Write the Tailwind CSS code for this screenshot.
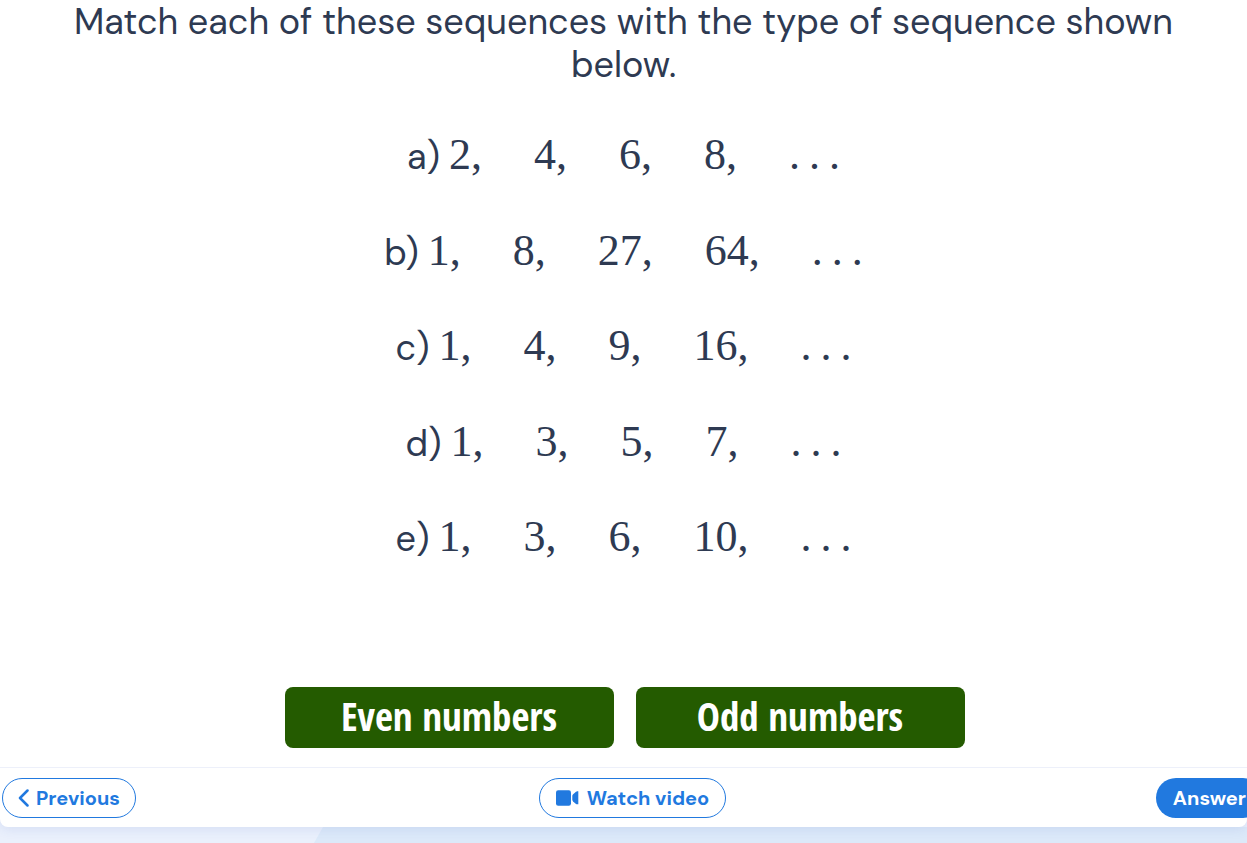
<!DOCTYPE html>
<html lang="en">
<head>
<meta charset="utf-8">
<meta name="viewport" content="width=device-width, initial-scale=1">
<title>Sequences</title>
<script src="https://cdn.jsdelivr.net/npm/@tailwindcss/browser@4"></script>
</head>
<body class="min-h-screen overflow-x-hidden bg-[#eaf0fc] font-['DM_Sans','Inter',sans-serif] text-[#2e3a52]">
<main class="relative z-10 flex flex-col rounded-b-lg bg-white shadow-[0_2px_12px_rgba(60,90,190,0.12)]">
  <section class="flex flex-col items-center">
    <h1 class="max-w-[1180px] text-center text-[36px] leading-[43px]">Match each of these sequences with the type of sequence shown below.</h1>
    <ul class="flex flex-col items-center pt-5 text-[36px]">
      <li class="flex h-24 items-baseline gap-[9px] pt-4"><span>a)</span><span class="flex gap-[52px] font-['Liberation_Serif',serif] text-[44px]"><span>2,</span><span>4,</span><span>6,</span><span>8,</span><span class="flex gap-[9px]"><span>.</span><span>.</span><span>.</span></span></span></li>
      <li class="flex h-[95px] items-baseline gap-[9px] pt-4"><span>b)</span><span class="flex gap-[52px] font-['Liberation_Serif',serif] text-[44px]"><span>1,</span><span>8,</span><span>27,</span><span>64,</span><span class="flex gap-[9px]"><span>.</span><span>.</span><span>.</span></span></span></li>
      <li class="flex h-24 items-baseline gap-[9px] pt-4"><span>c)</span><span class="flex gap-[52px] font-['Liberation_Serif',serif] text-[44px]"><span>1,</span><span>4,</span><span>9,</span><span>16,</span><span class="flex gap-[9px]"><span>.</span><span>.</span><span>.</span></span></span></li>
      <li class="flex h-[95px] items-baseline gap-[9px] pt-4"><span>d)</span><span class="flex gap-[52px] font-['Liberation_Serif',serif] text-[44px]"><span>1,</span><span>3,</span><span>5,</span><span>7,</span><span class="flex gap-[9px]"><span>.</span><span>.</span><span>.</span></span></span></li>
      <li class="flex h-[95px] items-baseline gap-[9px] pt-4"><span>e)</span><span class="flex gap-[52px] font-['Liberation_Serif',serif] text-[44px]"><span>1,</span><span>3,</span><span>6,</span><span>10,</span><span class="flex gap-[9px]"><span>.</span><span>.</span><span>.</span></span></span></li>
    </ul>
    <div class="flex gap-[22px] pt-[104px] pb-[19px] pl-0.5 font-['Liberation_Sans_Narrow','Open_Sans_Condensed',sans-serif] text-[39px] leading-none font-bold text-white">
      <button type="button" class="h-[61px] w-[329px] rounded-lg bg-[#245b00] pb-1">Even numbers</button>
      <button type="button" class="h-[61px] w-[329px] rounded-lg bg-[#245b00] pb-1">Odd numbers</button>
    </div>
  </section>
  <nav aria-label="Question controls" class="-mr-4 grid grid-cols-[1fr_auto_1fr] items-center border-t border-[#edf0fa] pt-2.5 pb-[9px] pl-0.5 text-[20px] font-bold text-[#2179df]">
    <button type="button" class="flex h-10 items-center gap-1.5 justify-self-start rounded-full border border-current px-[15px]">
      <svg class="h-[18px] w-3" viewBox="0 0 12 18" fill="none" stroke="currentColor" stroke-width="2.5" stroke-linecap="round" stroke-linejoin="round" aria-hidden="true"><path d="M9.5 1.5 2 9 9.5 16.5"/></svg>
      Previous
    </button>
    <button type="button" class="flex h-10 items-center gap-2 rounded-full border border-current px-4">
      <svg class="h-4 w-[23px]" viewBox="0 0 23 16" fill="currentColor" aria-hidden="true"><rect y="0.3" width="15" height="15.4" rx="2.2"/><path d="M16.3 6Q16.3 5 17.1 4.2L20 1.7Q20.5 1.3 21.2 1.3H22.3V14.3H21.2Q20.5 14.3 20 13.9L17.1 11.4Q16.3 10.6 16.3 9.6Z"/></svg>
      Watch video
    </button>
    <button type="button" class="h-10 justify-self-end rounded-full bg-[#2179df] px-[17px] text-white">Answer</button>
  </nav>
</main>
<div class="h-4 pl-[314px]" aria-hidden="true"><div class="h-full bg-[#dce9f9] [clip-path:polygon(9px_0,100%_0,100%_100%,0_100%)]"></div></div>
</body>
</html>
